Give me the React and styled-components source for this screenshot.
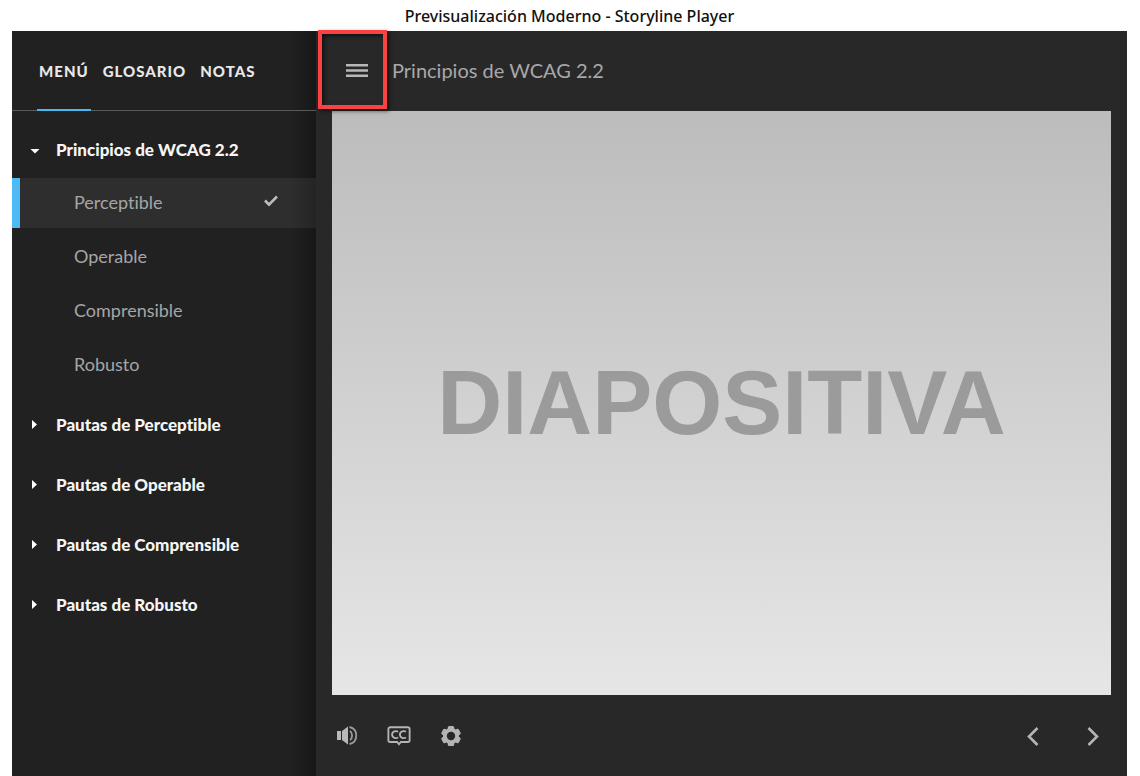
import React, { useState } from 'react';
import styled, { createGlobalStyle } from 'styled-components';

const GlobalStyle = createGlobalStyle`
  * {
    box-sizing: border-box;
  }
  body {
    margin: 0;
    background: #fff;
    font-family: Lato, "Open Sans", sans-serif;
    font-variant-ligatures: none;
  }
  button {
    border: 0;
    padding: 0;
    background: none;
    color: inherit;
    font: inherit;
    font-variant-ligatures: none;
    cursor: pointer;
  }
  ul {
    margin: 0;
    padding: 0;
    list-style: none;
  }
`;

const Page = styled.div`
  min-height: 100vh;
  display: flex;
  flex-direction: column;
  padding: 0 13px 0 12px;
`;
const WindowTitle = styled.h1`
  margin: 0;
  height: 31px;
  line-height: 32px;
  text-align: center;
  font-family: "Noto Sans", sans-serif;
  font-size: 16px;
  font-weight: 500;
  color: #111;
`;
const Player = styled.div`
  flex: 1;
  display: flex;
  background: #282828;
`;
const Sidebar = styled.aside`
  flex: 0 0 304px;
  background:
    linear-gradient(to right, rgba(0, 0, 0, 0) 278px, rgba(0, 0, 0, 0.3) 304px),
    #212121;
`;
const Tabs = styled.div`
  height: 80px;
  display: flex;
  gap: 10px;
  padding-left: 25px;
  border-bottom: 1px solid #5a5a5a;
`;
const Tab = styled.button`
  height: 80px;
  padding: 0 2px;
  border-top: 2px solid transparent;
  border-bottom: 2px solid ${({ $active }) => $active ? '#4ab8f0' : 'transparent'};
  font-size: 15px;
  font-weight: 900;
  letter-spacing: 1px;
  text-transform: uppercase;
  color: #e8e8e8;
`;
const Outline = styled.ul`
  display: flex;
  flex-direction: column;
  gap: 10px;
  padding-top: 14px;
`;
const SectionButton = styled.button`
  width: 100%;
  height: 50px;
  display: flex;
  align-items: center;
  gap: 15px;
  padding: 0 0 2px 17px;
  font-size: 17px;
  font-weight: 900;
  color: #f5f5f5;
`;
const Slides = styled.ul`
  display: flex;
  flex-direction: column;
  gap: 4px;
  padding-top: 3px;
`;
const SlideButton = styled.button`
  width: 100%;
  height: 50px;
  display: flex;
  align-items: center;
  justify-content: space-between;
  padding: 0 37px 2px 54px;
  border-left: 8px solid ${({ $active }) => $active ? '#4db9f5' : 'transparent'};
  background: ${({ $active }) => $active ? 'rgba(255, 255, 255, 0.06)' : 'none'};
  font-size: 18px;
  color: #a6a6a6;
`;
const Stage = styled.main`
  flex: 1;
  min-width: 0;
  color: #b4b4b4;
`;
const TopBar = styled.header`
  height: 80px;
  display: flex;
  align-items: center;
  gap: 5px;
  padding-left: 2px;
`;
const MenuButton = styled.button`
  width: 69px;
  height: 80px;
  display: flex;
  align-items: center;
  justify-content: center;
  position: relative;
  padding-left: 9px;
`;
const Highlight = styled.span`
  position: absolute;
  inset: -1px 0 2px;
  border: 4px solid #fb4141;
  box-shadow: 2px 2px 4px rgba(0, 0, 0, 0.6), inset 2px 2px 4px rgba(0, 0, 0, 0.6);
`;
const SlideTitle = styled.h2`
  margin: 0;
  font-size: 20px;
  line-height: 24px;
  padding-bottom: 2px;
  font-weight: 400;
  color: #a8a8a8;
`;
const Slide = styled.section`
  margin: 0 16px;
  aspect-ratio: 4 / 3;
  display: flex;
  align-items: center;
  justify-content: center;
  background: linear-gradient(#bcbcbc, #e6e6e6);
  font-family: "Liberation Sans", Arial, sans-serif;
  font-size: 90px;
  font-weight: 700;
  color: #9b9b9b;
`;
const Controls = styled.footer`
  height: 80px;
  display: flex;
  align-items: center;
  justify-content: space-between;
  padding: 2px 24px 0 19px;
`;
const ControlGroup = styled.div`
  display: flex;
  gap: ${({ $gap }) => $gap}px;
`;
const ControlButton = styled.button`
  width: ${({ $width }) => $width}px;
  height: 24px;
  display: flex;
  align-items: center;
  justify-content: center;
`;

const sections = [
  { title: 'Principios de WCAG 2.2', slides: ['Perceptible', 'Operable', 'Comprensible', 'Robusto'] },
  { title: 'Pautas de Perceptible', slides: [] },
  { title: 'Pautas de Operable', slides: [] },
  { title: 'Pautas de Comprensible', slides: [] },
  { title: 'Pautas de Robusto', slides: [] },
];
const tabs = ['Menú', 'Glosario', 'Notas'];

const Caret = ({ open }) => (
  <svg width="12" height="12" viewBox="0 0 12 12" fill="#fff" aria-hidden="true">
    <path d={open ? 'M1.5 6h9L6 10.5z' : 'M3 2v9l5-4.5z'} />
  </svg>
);

const Check = () => (
  <svg width="16" height="16" viewBox="0 0 16 16" fill="none" stroke="#bdbdbd" strokeWidth="2.6" aria-hidden="true">
    <path d="M2 6.5l4 4.2L14 2.5" />
  </svg>
);

const Bars = () => (
  <svg width="22" height="14" viewBox="0 0 22 14" fill="#b8b8b8" aria-hidden="true">
    <path d="M0 0h22v2.6H0zM0 5.2h22v2.6H0zM0 10.4h22V13H0z" />
  </svg>
);

const Speaker = () => (
  <svg width="22" height="20" viewBox="0 0 22 20" fill="#b8b8b8" aria-hidden="true">
    <path d="M1 5h4v9H1zM6 5l6-4.5v18L6 14z" />
    <path d="M14 5c2.8 2 2.8 7 0 9M13.5 1c9 2 9 15 0 17" fill="none" stroke="#9c9c9c" strokeWidth="1.8" />
  </svg>
);

const Captions = () => (
  <svg width="26" height="22" viewBox="0 0 26 22" fill="none" stroke="#b4b4b4" aria-hidden="true">
    <path d="M3.5 1.5h19a2 2 0 0 1 2 2v12a2 2 0 0 1-2 2H15L13 20l-2-2.5H3.5a2 2 0 0 1-2-2v-12a2 2 0 0 1 2-2z" strokeWidth="2" />
    <path d="M12 6.5c-2-1.5-6.5-.8-6.5 3s4.5 4.5 6.500 3M20.5 6.5c-2-1.5-6.5-.8-6.5 3s4.5 4.500 6.500 3" strokeWidth="2" />
  </svg>
);

const Gear = () => (
  <svg width="22" height="22" viewBox="0 0 22 22" aria-hidden="true">
    <g fill="#b4b4b4">
      {[0, 60, 120].map(angle => (
        <rect key={angle} x="7.8" y="1" width="6.4" height="20" rx="1.5" transform={`rotate(${angle} 11 11)`} />
      ))}
      <circle cx="11" cy="11" r="8" />
    </g>
    <circle cx="11" cy="11" r="4.2" fill="#282828" />
  </svg>
);

const Chevron = ({ right }) => (
  <svg width="12" height="20" viewBox="0 0 12 20" fill="none" stroke="#b4b4b4" strokeWidth="2.6" aria-hidden="true">
    <path d={right ? 'M1.5 2L10 10.5 1.5 19' : 'M10.5 2L2 10.5l8.5 8.5'} />
  </svg>
);

const App = () => {
  const [tab, setTab] = useState('Menú');
  const [open, setOpen] = useState(sections[0].title);
  const [current, setCurrent] = useState('Perceptible');

  return (
    <Page>
      <GlobalStyle />
      <WindowTitle>Previsualización Moderno - Storyline Player</WindowTitle>
      <Player>
        <Sidebar>
          <Tabs role="tablist">
            {tabs.map(name => (
              <Tab key={name} role="tab" aria-selected={tab === name} $active={tab === name} onClick={() => setTab(name)}>
                {name}
              </Tab>
            ))}
          </Tabs>
          <Outline>
            {sections.map(({ title, slides }) => {
              const expanded = open === title;

              return (
                <li key={title}>
                  <SectionButton aria-expanded={expanded} onClick={() => setOpen(expanded ? null : title)}>
                    <Caret open={expanded} />
                    {title}
                  </SectionButton>
                  {expanded && slides.length > 0 && (
                    <Slides>
                      {slides.map(slide => (
                        <li key={slide}>
                          <SlideButton $active={slide === current} onClick={() => setCurrent(slide)}>
                            {slide}
                            {slide === current && <Check />}
                          </SlideButton>
                        </li>
                      ))}
                    </Slides>
                  )}
                </li>
              );
            })}
          </Outline>
        </Sidebar>
        <Stage>
          <TopBar>
            <MenuButton aria-label="Menú lateral">
              <Bars />
              <Highlight />
            </MenuButton>
            <SlideTitle>Principios de WCAG 2.2</SlideTitle>
          </TopBar>
          <Slide>DIAPOSITIVA</Slide>
          <Controls>
            <ControlGroup $gap={28}>
              <ControlButton $width={24} aria-label="Volumen"><Speaker /></ControlButton>
              <ControlButton $width={24} aria-label="Subtítulos"><Captions /></ControlButton>
              <ControlButton $width={24} aria-label="Configuración"><Gear /></ControlButton>
            </ControlGroup>
            <ControlGroup $gap={40}>
              <ControlButton $width={20} aria-label="Anterior"><Chevron /></ControlButton>
              <ControlButton $width={20} aria-label="Siguiente"><Chevron right /></ControlButton>
            </ControlGroup>
          </Controls>
        </Stage>
      </Player>
    </Page>
  );
};

export default App;
